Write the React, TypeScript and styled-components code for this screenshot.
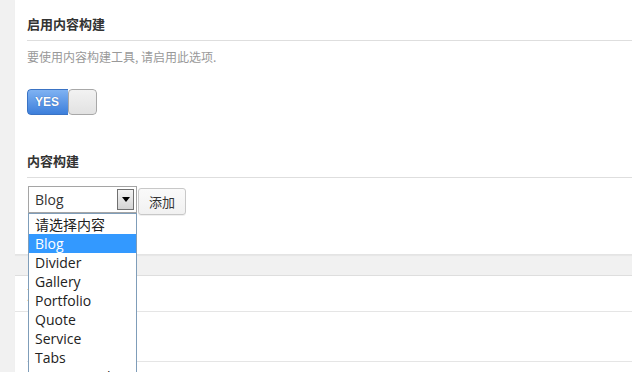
import React from "react";
import styled, { createGlobalStyle } from "styled-components";

const Global = createGlobalStyle`
  html, body { margin: 0; padding: 0; height: 372px; overflow: hidden; background: #f1f1f1; }
  body { font-family: "Open Sans", "Noto Sans CJK SC", sans-serif; }
  #root { height: 372px; }
`;

const Page = styled.div`
  display: flex;
  flex-direction: column;
  padding-left: 15px;
  height: 372px;
  box-sizing: border-box;
`;

const Panel = styled.div<{ $top?: boolean }>`
  background: #fff;
  border-top: ${(p) => (p.$top ? "none" : "1px solid #dedede")};
  border-bottom: 1px solid #e4e4e4;
  box-shadow: 0 1px 1px rgba(0, 0, 0, 0.04);
  padding-left: 12px;
  padding-bottom: ${(p) => (p.$top ? "39px" : "0")};
  margin-bottom: ${(p) => (p.$top ? "20px" : "0")};
`;

const Heading = styled.div<{ $first?: boolean }>`
  font-family: "Noto Sans CJK SC", "Noto Sans", sans-serif;
  font-weight: bold;
  font-size: 13px;
  line-height: 18px;
  color: #333;
  padding: 15px 0 7px;
  margin-top: ${(p) => (p.$first ? "0" : "22px")};
  border-bottom: 1px solid #dedede;
`;

const Desc = styled.div`
  font-family: "Noto Sans CJK SC", sans-serif;
  font-size: 12px;
  line-height: 16px;
  color: #999;
  margin-top: 8px;
`;

const Toggle = styled.div`
  margin-top: 24px;
  width: 70px;
  height: 26px;
  display: flex;
  border-radius: 4px;
  overflow: hidden;
  box-sizing: border-box;
`;

const ToggleOn = styled.div`
  width: 41px;
  background: linear-gradient(#7fb2f2, #3d7fdb);
  border: 1px solid #3a73c4;
  border-right: none;
  border-radius: 4px 0 0 4px;
  color: #fff;
  font-family: "Liberation Sans", Arial, sans-serif;
  font-weight: bold;
  font-size: 12px;
  display: flex;
  align-items: center;
  padding-left: 7px;
  box-sizing: border-box;
  text-shadow: 0 0 1px #1f4f99;
`;

const Knob = styled.div`
  flex: 1;
  background: linear-gradient(#f2f2f2, #e2e2e2);
  border: 1px solid #a8a8a8;
  border-radius: 4px;
`;

const Controls = styled.div`
  margin-top: 8px;
  display: flex;
  align-items: flex-start;
  gap: 1px;
`;

const SelectWrap = styled.div`
  position: relative;
  margin-left: 1px;
`;

const SelectBox = styled.div`
  width: 109px;
  height: 27px;
  border: 1px solid #a5a5a5;
  box-sizing: border-box;
  display: flex;
  align-items: center;
  justify-content: space-between;
  padding: 0 2px 0 6px;
  font-size: 14px;
  color: #333;
  background: #fff;
`;

const ArrowBtn = styled.div`
  width: 17px;
  height: 21px;
  box-sizing: border-box;
  border: 1px solid #707070;
  background: linear-gradient(#f4f4f4, #d4d4d4);
  display: flex;
  align-items: center;
  justify-content: center;
`;

const List = styled.div`
  position: absolute;
  top: 27px;
  left: 0;
  width: 109px;
  box-sizing: border-box;
  border: 1px solid #7f9db9;
  background: #fff;
  padding-top: 1px;
  z-index: 10;
`;

const Item = styled.div<{ $active?: boolean }>`
  height: 19px;
  line-height: 19px;
  padding-left: 6px;
  font-size: 14px;
  color: ${(p) => (p.$active ? "#fff" : "#222")};
  background: ${(p) => (p.$active ? "#3399ff" : "transparent")};
  white-space: nowrap;
`;

const AddButton = styled.button`
  margin-top: 2px;
  width: 48px;
  height: 27px;
  border: 1px solid #c8c8c8;
  border-radius: 3px;
  background: linear-gradient(#fafafa, #f1f1f1);
  font-family: "Noto Sans CJK SC", sans-serif;
  font-size: 13px;
  color: #333;
  padding: 0;
  box-shadow: 0 1px 0 rgba(0, 0, 0, 0.06);
`;

const Row = styled.div<{ $h: number; $inset?: boolean }>`
  height: ${(p) => p.$h}px;
  box-sizing: border-box;
  border-bottom: 1px solid #e5e5e5;
  margin-left: ${(p) => (p.$inset ? "0" : "-12px")};
  padding-left: ${(p) => (p.$inset ? "0" : "12px")};
  display: flex;
  align-items: center;
  font-family: "Noto Sans CJK SC", sans-serif;
  font-size: 13px;
  color: #333;
`;

const Panel2 = styled(Panel)`
  flex: 1;
  border-bottom: none;
`;

const options = [
  "请选择内容",
  "Blog",
  "Divider",
  "Gallery",
  "Portfolio",
  "Quote",
  "Service",
  "Tabs",
  "Testimonial",
  "Text",
];

export default function App() {
  return (
    <>
      <Global />
      <Page>
        <Panel $top>
          <Heading $first>启用内容构建</Heading>
          <Desc>要使用内容构建工具, 请启用此选项.</Desc>
          <Toggle>
            <ToggleOn>YES</ToggleOn>
            <Knob />
          </Toggle>
          <Heading>内容构建</Heading>
          <Controls>
            <SelectWrap>
              <SelectBox>
                <span>Blog</span>
                <ArrowBtn>
                  <svg width="8" height="5" viewBox="0 0 8 5">
                    <path d="M0 0h8L4 5z" fill="#000" />
                  </svg>
                </ArrowBtn>
              </SelectBox>
              <List>
                {options.map((o) => (
                  <Item key={o} $active={o === "Blog"}>
                    {o}
                  </Item>
                ))}
              </List>
            </SelectWrap>
            <AddButton>添加</AddButton>
          </Controls>
        </Panel>
        <Panel2>
          <Row $h={36}>页面</Row>
          <Row $h={50} $inset />
        </Panel2>
      </Page>
    </>
  );
}
